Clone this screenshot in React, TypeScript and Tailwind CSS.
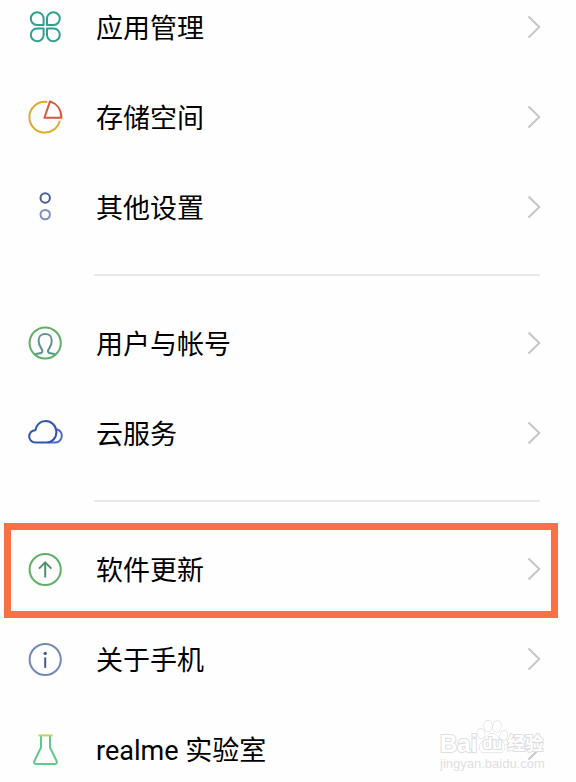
import React from 'react';

type IconProps = { className?: string };

const AppsIcon: React.FC<IconProps> = ({ className }) => (
  <svg viewBox="0 0 36 36" fill="none" stroke="#2f9f8f" strokeWidth="2" strokeLinejoin="round" className={className}>
    <path d="M16.6 16H10A6.4 6.4 0 1 1 16.6 9.6Z" />
    <path d="M20 16V9.6A6.4 6.4 0 1 1 26.6 16Z" />
    <path d="M16.6 19.4V26A6.4 6.4 0 1 1 10 19.4Z" />
    <path d="M20 19.4H26.6A6.4 6.4 0 1 1 20 26Z" />
  </svg>
);

const StorageIcon: React.FC<IconProps> = ({ className }) => (
  <svg viewBox="0 0 36 36" fill="none" strokeWidth="2" strokeLinejoin="round" className={className}>
    <path d="M20.2 3C19.4 2.8 18.6 2.8 17.8 2.8A15.4 15.4 0 1 0 32.8 21.6" stroke="#e0a92e" />
    <path d="M23 2.4L17.4 18.8H34.4C34.4 11 30 4.8 23 2.4Z" stroke="#d9583c" />
  </svg>
);

const OtherIcon: React.FC<IconProps> = ({ className }) => (
  <svg viewBox="0 0 36 36" fill="none" strokeWidth="2" className={className}>
    <circle cx="18.2" cy="9" r="4.7" stroke="#4d5f92" />
    <circle cx="18.2" cy="25.6" r="4.7" stroke="#7c90bb" />
  </svg>
);

const UserIcon: React.FC<IconProps> = ({ className }) => (
  <svg viewBox="0 0 36 36" fill="none" strokeWidth="2" strokeLinecap="round" className={className}>
    <path
      d="M8 29.6C10.2 28 15.4 29.2 15.4 26.2C15.4 23.6 11.6 21.6 11.6 15.4C11.6 11.4 14.4 9 18.2 9C22 9 24.8 11.4 24.8 15.4C24.8 21.6 21 23.6 21 26.2C21 29.2 26.2 28 28.4 29.6"
      stroke="#5f9390"
    />
    <circle cx="18.2" cy="18" r="15.6" stroke="#5fb065" />
  </svg>
);

const CloudIcon: React.FC<IconProps> = ({ className }) => (
  <svg viewBox="0 0 36 36" fill="none" strokeWidth="2" strokeLinejoin="round" className={className}>
    <path d="M29.5 14.2C32.8 15 34.8 17.6 34.8 20.8C34.8 24.8 31.6 27.6 27.8 27.6H22" stroke="#4a6cc4" />
    <path
      d="M8.6 27.6C4.8 27.6 2.2 24.8 2.2 21.6C2.2 18 4.8 15.2 8.4 15.2C9.4 9.8 13.4 6 18.6 6C24.6 6 29.4 10.8 29.4 17C29.4 23 25 27.6 19.4 27.6Z"
      stroke="#2f55b0"
    />
  </svg>
);

const UpdateIcon: React.FC<IconProps> = ({ className }) => (
  <svg viewBox="0 0 36 36" fill="none" strokeWidth="2" className={className}>
    <circle cx="18.2" cy="18.5" r="15.6" stroke="#5fb065" />
    <path d="M18.2 26.5V12M12 17.6L18.2 11.4L24.4 17.6" stroke="#4f9070" />
  </svg>
);

const AboutIcon: React.FC<IconProps> = ({ className }) => (
  <svg viewBox="0 0 36 36" fill="none" strokeWidth="2" className={className}>
    <circle cx="18.2" cy="18.5" r="15.6" stroke="#7488b8" />
    <circle cx="18.2" cy="12.4" r="1.7" fill="#46578a" />
    <path d="M18.2 16.4V26.8" stroke="#46578a" />
  </svg>
);

const LabIcon: React.FC<IconProps> = ({ className }) => (
  <svg viewBox="0 0 36 36" fill="none" strokeWidth="2" strokeLinejoin="round" className={className}>
    <path d="M14 5V16.5L7.4 30C6.7 31.6 7.4 33 9 33H28C29.6 33 30.3 31.6 29.6 30L23 16.5V5" stroke="#5fc987" />
    <path d="M11.4 4.4H25.6" stroke="#b8d968" />
  </svg>
);

const Chevron: React.FC<IconProps> = ({ className }) => (
  <svg viewBox="0 0 14 24" fill="none" stroke="#c6c6c6" strokeWidth="2" className={className}>
    <path d="M1.5 1.5L12.3 12L1.5 22.5" />
  </svg>
);

const groups = [
  [
    { label: '应用管理', icon: AppsIcon },
    { label: '存储空间', icon: StorageIcon },
    { label: '其他设置', icon: OtherIcon },
  ],
  [
    { label: '用户与帐号', icon: UserIcon },
    { label: '云服务', icon: CloudIcon },
  ],
  [
    { label: '软件更新', icon: UpdateIcon, highlighted: true },
    { label: '关于手机', icon: AboutIcon },
    { label: 'realme 实验室', icon: LabIcon },
  ],
];

const Watermark: React.FC = () => (
  <div className="absolute right-8 bottom-3 w-[104px] whitespace-nowrap pointer-events-none font-['Liberation_Sans','Noto_Sans_CJK_SC',sans-serif] font-bold text-white">
    <div className="flex items-end h-9 mb-1 [-webkit-text-stroke:2px_#dedede] [paint-order:stroke_fill]">
      <span className="text-2xl leading-5">Bai</span>
      <span className="relative w-8 h-9 -mx-px shrink-0">
        <svg viewBox="0 0 32 36" fill="white" stroke="#d4d4d4" strokeWidth="1" className="w-8 h-9">
          <ellipse cx="5" cy="15.5" rx="3.6" ry="5" transform="rotate(-15 5 15.5)" />
          <ellipse cx="12" cy="8" rx="4" ry="5.6" />
          <ellipse cx="21" cy="8.5" rx="4" ry="5.6" transform="rotate(10 21 8.5)" />
          <ellipse cx="27.5" cy="17.5" rx="3.6" ry="5" transform="rotate(15 27.5 17.5)" />
          <path d="M16 15.5C20 15.5 21 19 24 21.5C27 24 29 26 28.5 30C28 34 25 35 22 34.5C18 34 14 34 10 34.5C6 35 4 33 3.5 30C3 26 6 24 8.5 21.5C11 19 12 15.5 16 15.5Z" />
        </svg>
        <span className="absolute inset-x-0 bottom-0 text-center text-base leading-5">du</span>
      </span>
      <span className="text-lg leading-5">经验</span>
    </div>
    <div className="text-[13px] leading-3 font-normal text-[#dedede]">jingyan.baidu.com</div>
  </div>
);

export default function App() {
  return (
    <main className="relative h-screen overflow-hidden bg-[#fefefe] text-black font-[Roboto,'Noto_Sans_CJK_SC',sans-serif]">
      {/* List is scrolled, so the first row starts above the fold */}
      <div className="-mt-[18px]">
        {groups.map((items, i) => (
          <section key={i}>
            {i > 0 && <hr className="ml-[94px] mr-9 my-[22px] border-0 h-[2px] bg-[#e9e9e9]" />}
            {items.map((item) => (
              <button
                key={item.label}
                type="button"
                className="relative flex items-center w-full h-[90px] pl-[27px] pr-[35px] text-left"
              >
                <item.icon className="w-9 h-9 shrink-0" />
                <span className="flex-1 ml-[33px] pt-1 text-[27px] leading-9">{item.label}</span>
                <Chevron className="w-[14px] h-6 shrink-0" />
                {'highlighted' in item && (
                  <span className="absolute -top-px -bottom-1 left-1 right-[18px] border-[7px] border-[#f87144]" />
                )}
              </button>
            ))}
          </section>
        ))}
      </div>
      <Watermark />
    </main>
  );
}
